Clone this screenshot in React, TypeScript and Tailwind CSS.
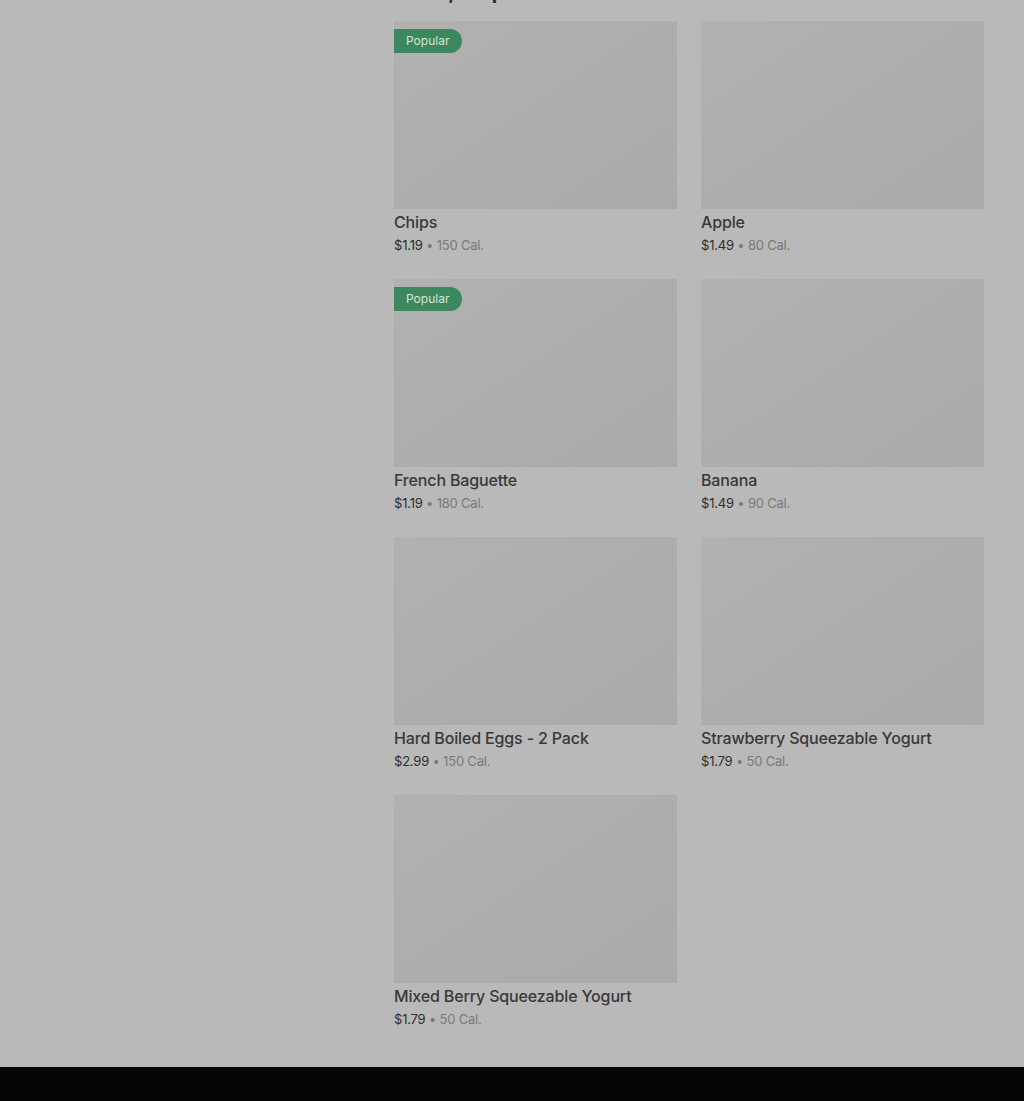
import React from 'react';

type Item = { name: string; price: string; cal: string; popular?: boolean };

const items: Item[] = [
  { name: 'Chips', price: '$1.19', cal: '150 Cal.', popular: true },
  { name: 'Apple', price: '$1.49', cal: '80 Cal.' },
  { name: 'French Baguette', price: '$1.19', cal: '180 Cal.', popular: true },
  { name: 'Banana', price: '$1.49', cal: '90 Cal.' },
  { name: 'Hard Boiled Eggs - 2 Pack', price: '$2.99', cal: '150 Cal.' },
  { name: 'Strawberry Squeezable Yogurt', price: '$1.79', cal: '50 Cal.' },
  { name: 'Mixed Berry Squeezable Yogurt', price: '$1.79', cal: '50 Cal.' },
];

function ItemCard({ item }: { item: Item }) {
  return (
    <div className="flex flex-col">
      <div className="relative h-[188px] w-full bg-gradient-to-br from-[#b1b1b1] via-[#adadad] to-[#aaaaaa]">
        {item.popular && (
          <span className="absolute left-0 top-2 flex h-6 w-[68px] items-center rounded-r-full bg-[#3b875e] pl-3 text-[12px] leading-none text-[#d6e6db]">
            Popular
          </span>
        )}
      </div>
      <div className="mt-[3px] text-[16px] font-medium leading-5 tracking-[-0.15px] text-[#383838]">
        {item.name}
      </div>
      <div className="mt-1 text-[13px] leading-[18px] tracking-[-0.2px]">
        <span className="text-[#2e2e2e]">{item.price}</span>
        <span className="text-[#7a7a7a]"> • {item.cal}</span>
      </div>
    </div>
  );
}

export default function App() {
  return (
    <div className="min-h-[1101px] overflow-hidden bg-[#b9b9b9] font-['Inter',sans-serif]">
      <div className="flex">
        {/* sidebar area, empty under the overlay */}
        <aside className="w-[394px] shrink-0" />
        <main className="flex-1 pr-10 pb-[39px]">
          <h2 className="-mt-[20px] h-6 text-[20px] font-bold leading-6 text-[#2a2a2a]">
            Sides, Chips &amp; Fruit
          </h2>
          <div className="mt-[17px] grid grid-cols-2 gap-x-6 gap-y-[25px]">
            {items.map((it) => (
              <ItemCard key={it.name} item={it} />
            ))}
          </div>
        </main>
      </div>
      <footer className="h-[34px] bg-[#050505]" />
    </div>
  );
}
